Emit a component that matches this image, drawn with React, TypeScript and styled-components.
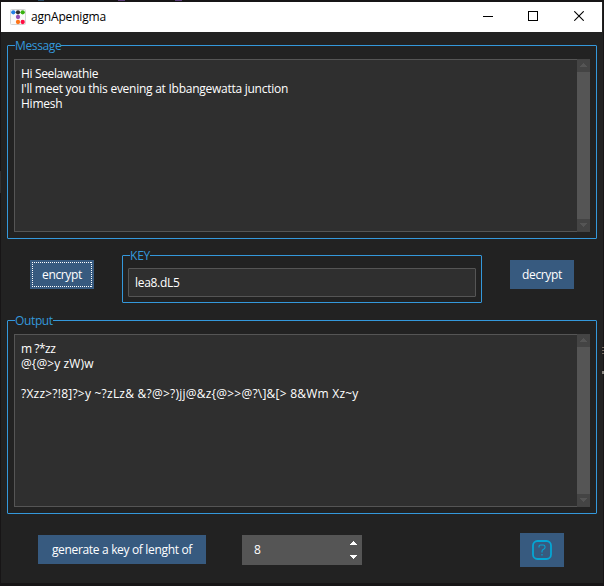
import React from "react";
import styled, { createGlobalStyle } from "styled-components";

const GlobalStyle = createGlobalStyle`
  * { box-sizing: border-box; }
  body { margin: 0; background: #191718; overflow: hidden; }
  button, input { font: inherit; color: inherit; }
`;

const Desktop = styled.div`
  position: relative;
  width: 604px;
  height: 586px;
  padding: 2px 1px 3px;
  background: #171516;
  font: 12px/15px "Open Sans", "Noto Sans", sans-serif;
  color: #fff;
`;

const Backdrop = styled.svg`
  position: absolute;
  inset: 0;
  pointer-events: none;
`;

const Window = styled.main`
  display: flex;
  flex-direction: column;
  height: 581px;
  background: #222222;
`;

const TitleBar = styled.header`
  display: flex;
  align-items: center;
  flex: none;
  width: 601px;
  height: 30px;
  padding-left: 9px;
  background: #fff;
  color: #000;
`;

const Title = styled.h1`
  flex: 1;
  margin: 0 0 0 5px;
  font-size: 12px;
  font-weight: 400;
  line-height: 16px;
`;

const WindowButton = styled.button<{ $w: number }>`
  display: grid;
  place-items: center;
  width: ${(p) => p.$w}px;
  height: 30px;
  padding: 0 0 2px;
  border: 0;
  background: none;
`;

const Body = styled.div`
  display: flex;
  flex-direction: column;
  flex: 1;
  padding: 13px 6px 0;
`;

const Group = styled.section<{ $h: number; $w: number; $pad: string }>`
  flex: none;
  width: ${(p) => p.$w}px;
  height: ${(p) => p.$h}px;
  padding: ${(p) => p.$pad};
  border: 1px solid #3498db;
  border-radius: 1px;
`;

const Legend = styled.h2<{ $indent: number }>`
  width: max-content;
  height: 16px;
  margin: -9px 0 0 ${(p) => p.$indent}px;
  background: #222222;
  color: #3498db;
  font-size: 12px;
  font-weight: 400;
  line-height: 18px;
`;

const Fit = styled.span<{ $ls?: number }>`
  display: block;
  white-space: pre;
  letter-spacing: ${(p) => p.$ls ?? 0}px;
`;

const TextPane = styled.div<{ $h: number }>`
  display: flex;
  width: 576px;
  height: ${(p) => p.$h}px;
  margin-top: 6px;
`;

const TextArea = styled.div`
  flex: 1;
  padding: 6px 6px 0;
  border: 1px solid #555;
  border-right: 0;
  background: #2f2f2f;
`;

const Line = styled.div`
  height: 15px;
`;

const ScrollTrack = styled.div`
  display: flex;
  flex-direction: column;
  width: 13px;
  background: #444;
`;

const ScrollArrow = styled.div`
  display: flex;
  justify-content: center;
  height: 13px;
  padding-top: 4px;
`;

const Thumb = styled.div`
  flex: 1;
  background: #555;
`;

const KeyRow = styled.div`
  display: flex;
  justify-content: space-between;
  height: 48px;
  margin: 16px 23px 17px;
`;

const Button = styled.button<{ $w: number; $h?: number }>`
  display: grid;
  place-items: center;
  flex: none;
  width: ${(p) => p.$w}px;
  height: ${(p) => p.$h ?? 29}px;
  padding: 0;
  border: 0;
  background: #375a7f;
`;

const KeyButton = styled(Button)`
  margin-top: 5px;
`;

const FocusRing = styled.span`
  display: grid;
  place-items: center;
  width: 60px;
  height: 25px;
  padding: 1px;
  background:
    repeating-linear-gradient(90deg, #fff 0 1px, transparent 1px 2px) top / 100% 1px no-repeat,
    repeating-linear-gradient(90deg, #fff 0 1px, transparent 1px 2px) bottom / 100% 1px no-repeat,
    repeating-linear-gradient(#fff 0 1px, transparent 1px 2px) left / 1px 100% no-repeat,
    repeating-linear-gradient(#fff 0 1px, transparent 1px 2px) right / 1px 100% no-repeat;
`;

const KeyInput = styled.input`
  display: block;
  width: 348px;
  height: 29px;
  margin-top: 5px;
  padding: 0 6px;
  border: 1px solid #555;
  border-radius: 1px;
  outline: 0;
  background: #2f2f2f;
  letter-spacing: -0.3px;
`;

const Footer = styled.footer`
  display: flex;
  align-items: flex-start;
  padding: 21px 33px 0 31px;
`;

const Spinner = styled.div`
  display: flex;
  justify-content: space-between;
  width: 120px;
  height: 30px;
  margin: 0 158px 0 36px;
  padding: 0 5px 0 12px;
  background: #555;
  line-height: 30px;
`;

const Arrows = styled.div`
  display: flex;
  flex-direction: column;
  justify-content: space-between;
  height: 18px;
  margin-top: 6px;
`;

const HelpButton = styled(Button)`
  margin-top: -2px;
`;

function Triangle({ down, color, w }: { down?: boolean; color: string; w: number }) {
  return (
    <svg width={w} height="4" viewBox="0 0 7 4" preserveAspectRatio="none" shapeRendering="crispEdges" display="block">
      <path d={down ? "M0 0h7v1h-1v1h-1v1h-1v1h-1v-1h-1v-1h-1v-1h-1z" : "M0 4h7v-1h-1v-1h-1v-1h-1v-1h-1v1h-1v1h-1v1h-1z"} fill={color} />
    </svg>
  );
}

function AppLogo() {
  const dots: [number, number, string][] = [
    [3.3, 3.3, "#2381e6"], [8, 3.3, "#333"], [12.7, 3.3, "#39b20f"],
    [8, 8, "#9250b5"], [8, 13, "#ff7518"], [12.7, 13, "#ff0d42"],
  ];
  return (
    <svg width="16" height="16" viewBox="0 0 16 16">
      <rect x=".5" y=".5" width="15" height="15" rx="1" fill="#fafafa" stroke="#d5d5d5" />
      {dots.map(([x, y, c]) => <circle key={c} cx={x} cy={y} r="2.15" fill={c} />)}
    </svg>
  );
}

function ScrollBar() {
  return (
    <ScrollTrack>
      <ScrollArrow><Triangle color="#555" w={7} /></ScrollArrow>
      <Thumb />
      <ScrollArrow><Triangle down color="#555" w={7} /></ScrollArrow>
    </ScrollTrack>
  );
}

interface PaneProps { label: string; spacing: number; h: number; lines: [string, number][]; }

function TextGroup({ label, spacing, h, lines }: PaneProps) {
  return (
    <Group $w={590} $h={h} $pad="0 6px">
      <Legend $indent={1}><Fit $ls={spacing}>{label}</Fit></Legend>
      <TextPane $h={173}>
        <TextArea>
          {lines.map(([text, ls], i) => <Line key={i}><Fit $ls={ls}>{text}</Fit></Line>)}
        </TextArea>
        <ScrollBar />
      </TextPane>
    </Group>
  );
}

export default function App() {
  return (
    <>
      <GlobalStyle />
      <Desktop>
        <Window>
          <TitleBar>
            <AppLogo />
            <Title><Fit $ls={-0.18}>agnApenigma</Fit></Title>
            <WindowButton $w={44} aria-label="Minimize">
              <svg width="10" height="10" shapeRendering="crispEdges"><path d="M0 5h10v1H0z" /></svg>
            </WindowButton>
            <WindowButton $w={46} aria-label="Maximize">
              <svg width="10" height="10" shapeRendering="crispEdges"><path d="M0 0h10v10H0zM1 1v8h8V1z" fillRule="evenodd" /></svg>
            </WindowButton>
            <WindowButton $w={46} aria-label="Close">
              <svg width="10" height="10"><path d="M.3.3l9.4 9.4M9.7.3L.3 9.7" stroke="#000" strokeWidth="1.1" /></svg>
            </WindowButton>
          </TitleBar>
          <Body>
            <TextGroup label="Message" spacing={-0.36} h={194} lines={[
              ["Hi Seelawathie", -0.36],
              ["I'll meet you this evening at Ibbangewatta junction", -0.26],
              ["Himesh", -0.25],
            ]} />
            <KeyRow>
              <KeyButton $w={64}><FocusRing><Fit $ls={-0.36}>encrypt</Fit></FocusRing></KeyButton>
              <Group $w={360} $h={48} $pad="0 5px">
                <Legend $indent={2}><Fit $ls={-0.2}>KEY</Fit></Legend>
                <KeyInput defaultValue="lea8.dL5" spellCheck={false} />
              </Group>
              <KeyButton $w={64}><Fit $ls={-0.36}>decrypt</Fit></KeyButton>
            </KeyRow>
            <TextGroup label="Output" spacing={-0.36} h={194} lines={[
              ["m ?*zz", -0.5],
              ["@{@>y zW)w", 0.1],
              ["", 0],
              ["?Xzz>?!8]?>y ~?zLz& &?@>?)jj@&z{@>>@?\\]&[> 8&Wm Xz~y", 0.23],
            ]} />
            <Footer>
              <Button $w={168}><Fit $ls={-0.33}>generate a key of lenght of</Fit></Button>
              <Spinner>
                8
                <Arrows><Triangle color="#fff" w={7} /><Triangle down color="#fff" w={7} /></Arrows>
              </Spinner>
              <HelpButton $w={44} $h={34} aria-label="Help">
                <svg width="20" height="20" fill="none" stroke="#05a6d4">
                  <rect x="1" y="1" width="18" height="18" rx="4.5" strokeWidth="1.8" />
                  <path d="M7 7.5V6.6Q7 5 8.6 5h2.6Q13 5 13 6.7V7.4Q13 8.6 11.6 9.2Q10 9.9 10 11.3V12.5M10 14v1.5" strokeWidth="1.1" />
                </svg>
              </HelpButton>
            </Footer>
          </Body>
        </Window>
        <Backdrop width="604" height="586" shapeRendering="crispEdges">
          <path d="M118 0h7v1h-7zM175 0h7v1h-7z" fill="#5b3d78" />
          <path d="M38 0h6v1h-6z" fill="#294963" />
          <path d="M602 347h2v1h-2zM602 350h2v1h-2zM602 353h2v1h-2z" fill="#756960" />
          <path d="M602 371h2v3h-2z" fill="#8b8782" />
          <path d="M0 171h1v22H0z" fill="#303030" />
        </Backdrop>
      </Desktop>
    </>
  );
}
